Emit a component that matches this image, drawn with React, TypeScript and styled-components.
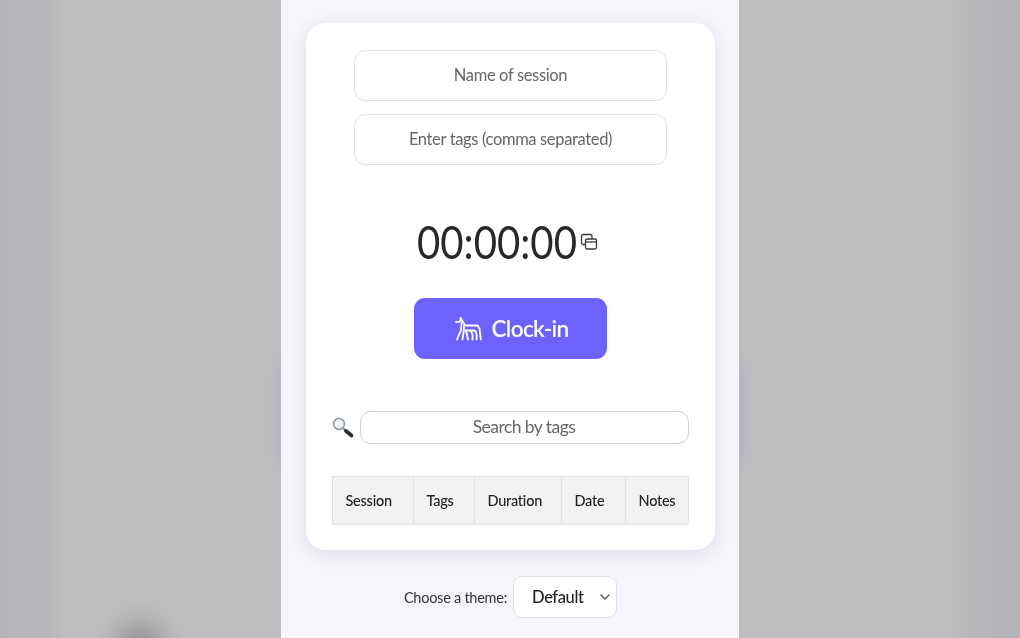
import React from 'react';
import styled, { createGlobalStyle } from 'styled-components';

const GlobalStyle = createGlobalStyle`
  html, body {
    margin: 0;
    padding: 0;
    height: 638px;
    overflow: hidden;
    font-family: 'Lato', 'Liberation Sans', sans-serif;
  }
  * { box-sizing: border-box; }
`;

const columns = [
  { label: 'Session', width: 81 },
  { label: 'Tags', width: 61 },
  { label: 'Duration', width: 87 },
  { label: 'Date', width: 64 },
  { label: 'Notes', width: 63 },
];

const DogIcon: React.FC = () => (
  <svg width="27" height="24" viewBox="0 0 27 24" fill="none" stroke="#fff" strokeWidth="1.8" strokeLinecap="round" strokeLinejoin="round">
    <path d="M1 5 L5 4.6 L5.6 1 L8 5 L10 8" />
    <path d="M9 8.5 H22.5 L24.5 11.5 L25.8 22.5" />
    <path d="M6.5 6 L6 13 L2 22.5" />
    <path d="M9 10 L8.6 15 L7.4 22.5" />
    <path d="M10 13.5 H18.5 C21.5 13.5 22 17 21.6 22.5" />
    <path d="M15 13.5 C17.5 15.5 18 18.5 17.4 22.5" />
    <path d="M11 13.5 L13 22.5" />
  </svg>
);

const CopyIcon: React.FC = () => (
  <svg width="18" height="18" viewBox="0 0 18 18" fill="none" stroke="#3a3a3a" strokeWidth="1.3">
    <rect x="1.5" y="1.5" width="10.5" height="10" rx="1.5" />
    <rect x="5.5" y="6" width="11" height="10" rx="1.5" fill="#fff" />
    <path d="M5.5 9 H16.5" />
  </svg>
);

const MagnifierIcon: React.FC = () => (
  <svg width="22" height="21" viewBox="0 0 22 21" fill="none">
    <circle cx="7" cy="7" r="5.5" fill="#eef2f6" stroke="#8f979e" strokeWidth="1.5" />
    <path d="M11.5 11.5 L13.5 13.5" stroke="#777" strokeWidth="2" />
    <path d="M14 14 L19.5 18.5" stroke="#2c2c2c" strokeWidth="3.6" strokeLinecap="round" />
  </svg>
);

const App: React.FC = () => (
  <>
    <GlobalStyle />
    <Page>
      <SideGlow />
      <Panel>
        <Card>
          <SessionFields>
            <TextField placeholder="Name of session" />
            <TextField placeholder="Enter tags (comma separated)" />
          </SessionFields>
          <TimerRow>
            <TimerText>00:00:00</TimerText>
            <CopyButton><CopyIcon /></CopyButton>
          </TimerRow>
          <ClockButton>
            <DogIcon />
            Clock-in
          </ClockButton>
          <SearchRow>
            <MagnifierIcon />
            <SearchField placeholder="Search by tags" />
          </SearchRow>
          <SessionTable>
            <colgroup>
              {columns.map((col) => (
                <col key={col.label} width={col.width} />
              ))}
            </colgroup>
            <thead>
              <tr>
                {columns.map((col) => (
                  <HeaderCell key={col.label}>{col.label}</HeaderCell>
                ))}
              </tr>
            </thead>
          </SessionTable>
        </Card>
        <ThemeRow>
          <ThemeLabel>Choose a theme:</ThemeLabel>
          <ThemeSelect>
            Default
            <svg width="12" height="8" viewBox="0 0 12 8" fill="none" stroke="#555" strokeWidth="1.4">
              <path d="M1.5 1.5 L6 6 L10.5 1.5" />
            </svg>
          </ThemeSelect>
        </ThemeRow>
      </Panel>
    </Page>
  </>
);

const Page = styled.div`
  position: relative;
  display: flex;
  justify-content: center;
  width: 1020px;
  height: 638px;
  overflow: hidden;
  background: linear-gradient(
    90deg,
    #b5b6b9 0,
    #b6b7b9 45px,
    #bebebe 65px,
    #bebebe 270px,
    #bcbcbe 281px,
    #bcbcbe 739px,
    #bebebe 750px,
    #bebebe 945px,
    #b6b7b9 975px,
    #b4b5b8 1020px
  );

  &::after {
    content: '';
    position: absolute;
    left: 115px;
    top: 622px;
    width: 50px;
    height: 50px;
    border-radius: 50%;
    background: #949494;
    filter: blur(12px);
  }
`;

const SideGlow = styled.div`
  position: absolute;
  left: 268px;
  top: 364px;
  width: 484px;
  height: 98px;
  background: linear-gradient(90deg, rgba(182, 182, 196, 0) 0, #b6b6c6 13px, #b6b6c6 471px, rgba(182, 182, 196, 0) 484px);
  filter: blur(5px);
`;

const Panel = styled.div`
  position: relative;
  z-index: 1;
  width: 458px;
  height: 638px;
  margin-left: -1px;
  padding: 23px 25px 0;
  background: #f5f6fb;
  flex-shrink: 0;
  filter: blur(0.45px);
`;

const Card = styled.div`
  display: flex;
  flex-direction: column;
  align-items: center;
  width: 409px;
  height: 527px;
  padding: 27px 26px 0;
  background: #fff;
  border-radius: 20px;
  box-shadow: 0 4px 18px rgba(60, 60, 100, 0.12);
`;

const SessionFields = styled.div`
  display: flex;
  flex-direction: column;
  gap: 13px;
  margin-left: 1px;
`;

const TextField = styled.input`
  display: block;
  width: 313px;
  height: 51px;
  padding: 0 0 2px;
  border: 1.5px solid #dfe0e3;
  border-radius: 11px;
  background: #fff;
  font: 400 16.5px 'Lato', sans-serif;
  letter-spacing: -0.35px;
  text-align: center;
  outline: none;

  &::placeholder {
    color: #666;
    opacity: 1;
  }
`;

const TimerRow = styled.div`
  display: flex;
  align-items: center;
  margin: 47px 0 1px -5px;
  height: 58px;
`;

const TimerText = styled.span`
  display: block;
  font-size: 47px;
  font-weight: 400;
  line-height: 58px;
  color: #282828;
  transform: scaleX(0.855);
  transform-origin: left center;
  margin-right: -27px;
`;

const CopyButton = styled.span`
  display: flex;
  margin: 1px 0 0 3px;
`;

const ClockButton = styled.button`
  display: flex;
  align-items: center;
  justify-content: center;
  gap: 9px;
  width: 193px;
  height: 61px;
  margin: 27px 0 0 1px;
  padding: 0 0 0 3px;
  border: none;
  border-radius: 11px;
  background: #6c63ff;
  color: #fff;
  font: 600 22.5px 'Lato', sans-serif;
  letter-spacing: -0.6px;
`;

const SearchRow = styled.div`
  display: flex;
  align-items: center;
  gap: 6px;
  width: 100%;
  height: 33px;
  margin-top: 52px;
`;

const SearchField = styled.input`
  width: 329px;
  height: 33px;
  padding: 0 0 2px;
  border: 1.5px solid #cfd0d2;
  border-radius: 11px;
  background: #fff;
  font: 400 17.5px 'Lato', sans-serif;
  letter-spacing: -0.55px;
  text-align: center;
  outline: none;

  &::placeholder {
    color: #666;
    opacity: 1;
  }
`;

const SessionTable = styled.table`
  width: 356px;
  margin-top: 32px;
  border-collapse: collapse;
  table-layout: fixed;
`;

const HeaderCell = styled.th`
  height: 48px;
  padding: 0 0 1px 13px;
  border: 1px solid #e0e1e3;
  background: #f1f2f4;
  color: #222;
  font-size: 14.5px;
  font-weight: 500;
  letter-spacing: -0.25px;
  text-align: left;
`;

const ThemeRow = styled.div`
  display: flex;
  align-items: center;
  justify-content: center;
  gap: 6px;
  margin: 26px 0 0 2px;
`;

const ThemeLabel = styled.span`
  font-size: 14.5px;
  letter-spacing: -0.25px;
  color: #333;
`;

const ThemeSelect = styled.div`
  display: flex;
  align-items: center;
  justify-content: space-between;
  width: 104px;
  height: 42px;
  padding: 0 5px 0 18px;
  border: 1.5px solid #dfe0e3;
  border-radius: 9px;
  background: #fff;
  color: #1f1f1f;
  font-size: 16.5px;
  font-weight: 500;
  letter-spacing: -0.4px;
`;

export default App;
